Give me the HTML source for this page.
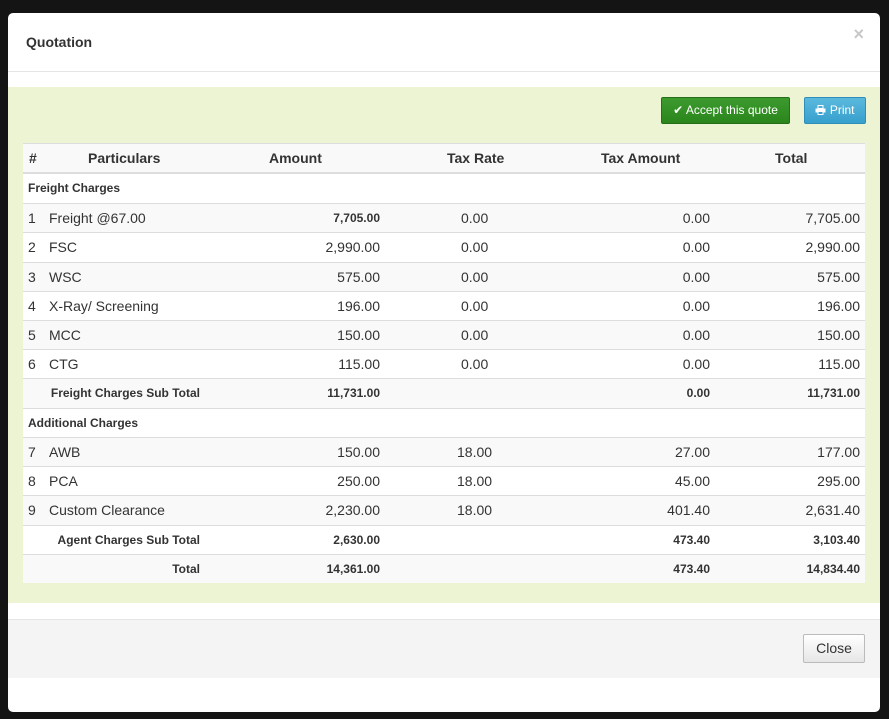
<!DOCTYPE html>
<html><head><meta charset="utf-8"><style>
body{margin:0;width:889px;height:719px;background:#141414;position:relative;overflow:hidden;font-family:"Liberation Sans",Arial,sans-serif;color:#333}
.modal{position:absolute;left:8px;top:13px;width:872px;height:699px;background:#fff;border-radius:5px;overflow:hidden}
.a{position:absolute}
.row{position:absolute;left:15px;width:842px;border-top:1px solid #ddd}
.c{position:absolute;top:0;white-space:nowrap}
.n{font-size:14px}
.b{font-size:12px;font-weight:bold}
.hd{font-size:14px;font-weight:bold}
.g{background:#f9f9f9}
.w{background:#fff}
</style></head><body>
<div class="modal">
<div class="a" style="left:18px;top:21px;font-size:14px;font-weight:bold;color:#333">Quotation</div>
<div class="a" style="right:16px;top:11px;font-size:18px;font-weight:bold;color:#c8c8c8">×</div>
<div class="a" style="left:0;top:58px;width:872px;border-top:1px solid #e5e5e5"></div>
<div class="a" style="left:0;top:74px;width:872px;height:516px;background:#ecf4d3"></div>
<div class="a" style="left:653px;top:84px;width:127px;height:25px;background:linear-gradient(#3d9a2e,#2a861c);border:1px solid #256f18;border-radius:2px;color:#fff;font-size:12px;line-height:25px;text-align:center">✔ Accept this quote</div>
<div class="a" style="left:796px;top:84px;width:60px;height:25px;background:linear-gradient(#5bb9dd,#37a0cd);border:1px solid #2f8fb8;border-radius:2px;color:#fff;font-size:12px;line-height:25px;text-align:center"><svg width="11" height="10" viewBox="0 0 11 10" style="vertical-align:-1px"><rect x="3" y="0.5" width="5" height="3" fill="none" stroke="#fff"/><rect x="0.5" y="3.5" width="10" height="4" fill="#fff"/><rect x="3" y="6.5" width="5" height="3" fill="#37a0cd" stroke="#fff"/></svg> Print</div>
<div class="a" style="left:15px;top:130px;width:842px;height:440px;background:#fff"></div>

<div class="row g" style="top:130px;height:28px;line-height:28px;border-bottom:1px solid #ddd"><span class="c hd" style="left:6px">#</span><span class="c hd" style="left:65px">Particulars</span><span class="c hd" style="left:246px">Amount</span><span class="c hd" style="left:424px">Tax Rate</span><span class="c hd" style="left:578px">Tax Amount</span><span class="c hd" style="left:752px">Total</span></div>
<div class="row w" style="top:160px;height:29px;line-height:29px"><span class="c b" style="left:5px">Freight Charges</span></div>
<div class="row g" style="top:190px;height:28px;line-height:28px"><span class="c n" style="left:5px">1</span><span class="c n" style="left:26px">Freight @67.00</span><span class="c b" style="right:485px">7,705.00</span><span class="c n" style="left:438px">0.00</span><span class="c n" style="right:155px">0.00</span><span class="c n" style="right:5px">7,705.00</span></div>
<div class="row w" style="top:219px;height:29px;line-height:29px"><span class="c n" style="left:5px">2</span><span class="c n" style="left:26px">FSC</span><span class="c n" style="right:485px">2,990.00</span><span class="c n" style="left:438px">0.00</span><span class="c n" style="right:155px">0.00</span><span class="c n" style="right:5px">2,990.00</span></div>
<div class="row g" style="top:249px;height:28px;line-height:28px"><span class="c n" style="left:5px">3</span><span class="c n" style="left:26px">WSC</span><span class="c n" style="right:485px">575.00</span><span class="c n" style="left:438px">0.00</span><span class="c n" style="right:155px">0.00</span><span class="c n" style="right:5px">575.00</span></div>
<div class="row w" style="top:278px;height:28px;line-height:28px"><span class="c n" style="left:5px">4</span><span class="c n" style="left:26px">X-Ray/ Screening</span><span class="c n" style="right:485px">196.00</span><span class="c n" style="left:438px">0.00</span><span class="c n" style="right:155px">0.00</span><span class="c n" style="right:5px">196.00</span></div>
<div class="row g" style="top:307px;height:28px;line-height:28px"><span class="c n" style="left:5px">5</span><span class="c n" style="left:26px">MCC</span><span class="c n" style="right:485px">150.00</span><span class="c n" style="left:438px">0.00</span><span class="c n" style="right:155px">0.00</span><span class="c n" style="right:5px">150.00</span></div>
<div class="row w" style="top:336px;height:28px;line-height:28px"><span class="c n" style="left:5px">6</span><span class="c n" style="left:26px">CTG</span><span class="c n" style="right:485px">115.00</span><span class="c n" style="left:438px">0.00</span><span class="c n" style="right:155px">0.00</span><span class="c n" style="right:5px">115.00</span></div>
<div class="row g" style="top:365px;height:29px;line-height:29px"><span class="c b" style="right:665px">Freight Charges Sub Total</span><span class="c b" style="right:485px">11,731.00</span><span class="c b" style="right:155px">0.00</span><span class="c b" style="right:5px">11,731.00</span></div>
<div class="row w" style="top:395px;height:28px;line-height:28px"><span class="c b" style="left:5px">Additional Charges</span></div>
<div class="row g" style="top:424px;height:28px;line-height:28px"><span class="c n" style="left:5px">7</span><span class="c n" style="left:26px">AWB</span><span class="c n" style="right:485px">150.00</span><span class="c n" style="left:434px">18.00</span><span class="c n" style="right:155px">27.00</span><span class="c n" style="right:5px">177.00</span></div>
<div class="row w" style="top:453px;height:28px;line-height:28px"><span class="c n" style="left:5px">8</span><span class="c n" style="left:26px">PCA</span><span class="c n" style="right:485px">250.00</span><span class="c n" style="left:434px">18.00</span><span class="c n" style="right:155px">45.00</span><span class="c n" style="right:5px">295.00</span></div>
<div class="row g" style="top:482px;height:29px;line-height:29px"><span class="c n" style="left:5px">9</span><span class="c n" style="left:26px">Custom Clearance</span><span class="c n" style="right:485px">2,230.00</span><span class="c n" style="left:434px">18.00</span><span class="c n" style="right:155px">401.40</span><span class="c n" style="right:5px">2,631.40</span></div>
<div class="row w" style="top:512px;height:28px;line-height:28px"><span class="c b" style="right:665px">Agent Charges Sub Total</span><span class="c b" style="right:485px">2,630.00</span><span class="c b" style="right:155px">473.40</span><span class="c b" style="right:5px">3,103.40</span></div>
<div class="row g" style="top:541px;height:28px;line-height:28px"><span class="c b" style="right:665px">Total</span><span class="c b" style="right:485px">14,361.00</span><span class="c b" style="right:155px">473.40</span><span class="c b" style="right:5px">14,834.40</span></div>

<div class="a" style="left:0;top:606px;width:872px;border-top:1px solid #e5e5e5"></div>
<div class="a" style="left:0;top:607px;width:872px;height:58px;background:#f4f4f4"></div>
<div class="a" style="left:795px;top:621px;width:60px;height:27px;background:linear-gradient(#fff,#e6e6e6);border:1px solid #bbb;border-radius:2px;font-size:14px;line-height:27px;text-align:center;color:#333">Close</div>
</div>
</body></html>
